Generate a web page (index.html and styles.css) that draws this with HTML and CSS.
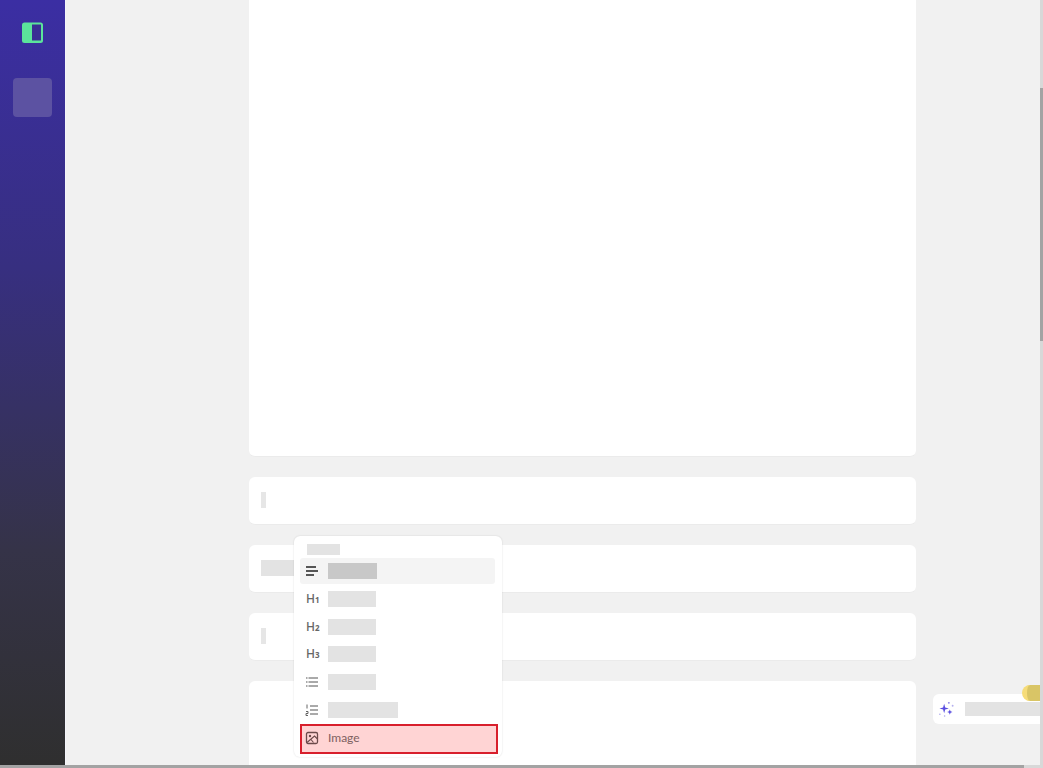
FILE: index.html
```html
<!DOCTYPE html>
<html lang="en">
<head>
<meta charset="utf-8">
<title>Editor</title>
<link rel="stylesheet" href="styles.css">
</head>
<body>
<div class="app">
  <aside class="sidebar">
    <button class="toggle" aria-label="Toggle sidebar">
      <svg width="22" height="22" viewBox="0 0 22 22"><rect x="0" y="0.500" width="21" height="20.500" rx="2.500" fill="#5be49b"/><rect x="10" y="2.500" width="9" height="16" fill="#3a2e94"/></svg>
    </button>
    <div class="nav-tile"></div>
  </aside>
  <main class="main">
    <div class="column">
      <section class="card card-hero"></section>
      <section class="card card-row"><span class="ph ph-thin"></span></section>
      <section class="card card-row"><span class="ph ph-wide"></span></section>
      <section class="card card-row"><span class="ph ph-thin"></span></section>
      <section class="card card-last"></section>
    </div>
  </main>
</div>

<div class="menu">
  <span class="ph menu-title"></span>
  <ul class="menu-list">
    <li class="item item-active">
      <svg class="ico" width="14" height="14" viewBox="0 0 14 14"><path d="M1 3h10M1 7h12M1 11h8" stroke="#222" stroke-width="1.300" fill="none"/></svg>
      <span class="ph ph-dark w49"></span>
    </li>
    <li class="item"><span class="hd">H<small>1</small></span><span class="ph w48"></span></li>
    <li class="item"><span class="hd">H<small>2</small></span><span class="ph w48"></span></li>
    <li class="item"><span class="hd">H<small>3</small></span><span class="ph w48"></span></li>
    <li class="item">
      <svg class="ico" width="14" height="14" viewBox="0 0 14 14"><path d="M3.500 3h9.500M3.500 7h9.500M3.500 11h9.500" stroke="#555" stroke-width="1" fill="none"/><path d="M1 3h1.500M1 7h1.500M1 11h1.500" stroke="#555" stroke-width="1.200" fill="none"/></svg>
      <span class="ph w48"></span>
    </li>
    <li class="item">
      <svg class="ico" width="14" height="14" viewBox="0 0 14 14"><path d="M5 3h8M5 7h8M5 11h8" stroke="#555" stroke-width="1" fill="none"/><path d="M2 1.500v4M1 8.500h2v2H1v2h2" stroke="#555" stroke-width=".9" fill="none"/></svg>
      <span class="ph w70"></span>
    </li>
    <li class="item item-image">
      <svg class="ico" width="14" height="14" viewBox="0 0 14 14"><rect x="1.500" y="1.500" width="11" height="11" rx="1.500" stroke="#6b4a4a" stroke-width="1.300" fill="none"/><path d="M2 11.500L9.500 5l3 3M6 8.500l2.500 3" stroke="#6b4a4a" stroke-width="1.100" fill="none"/><circle cx="5" cy="5" r="1.200" fill="#6b4a4a"/></svg>
      <span class="item-label">Image</span>
    </li>
  </ul>
</div>

<div class="assist">
  <svg width="18" height="18" viewBox="0 0 18 18"><path d="M6.500 3.500l1.100 3.900 3.900 1.100-3.900 1.100-1.100 3.900-1.100-3.900-3.900-1.100 3.900-1.100z" fill="#5a4ee0"/><path d="M12.500 9.500l.8 2 2 .8-2 .8-.8 2-.8-2-2-.8 2-.8z" fill="#5a4ee0"/><circle cx="11.500" cy="2.500" r="1" fill="#8d84e6"/><circle cx="15.500" cy="5.500" r="1" fill="#b5b0ee"/><circle cx="2" cy="14.500" r=".8" fill="#a8a2ec"/><circle cx="7" cy="16.500" r=".8" fill="#a8a2ec"/></svg>
  <span class="ph assist-bar"></span>
</div>
<div class="tag"></div>

<div class="vbar"><div class="vthumb"></div></div>
<div class="hbar"><div class="hthumb"></div></div>
</body>
</html>
```
FILE: styles.css
```css
* { box-sizing: border-box; }
html, body { margin: 0; height: 100%; overflow: hidden; }
body { font-family: "Noto Sans", "Liberation Sans", sans-serif; background: #f1f1f1; }
.app { display: flex; height: 765px; }
.sidebar {
  width: 66px; flex: none; display: flex; flex-direction: column; align-items: center;
  padding: 22px 0 0 0; gap: 34px; border-right: 1px solid #f4f4fa;
  background: linear-gradient(180deg, #3b2ea3 0%, #372f80 35%, #353348 72%, #2f2f2f 100%);
}
.toggle { width: 22px; height: 22px; padding: 0; border: 0; background: none; display: block; }
.toggle svg { display: block; }
.nav-tile { width: 39px; height: 39px; border-radius: 4px; background: #5c52a2; }
.main { flex: 1; overflow: hidden; padding-left: 183px; }
.column { width: 667px; display: flex; flex-direction: column; gap: 20px; }
.card { background: #fff; border-radius: 6px; border-bottom: 1px solid #ebebeb; flex: none; }
.card-hero { height: 457px; border-radius: 0 0 6px 6px; }
.card-row { height: 48px; padding: 0 12px 1px; display: flex; align-items: center; }
.card-last { height: 100px; }
.ph { display: block; background: #e3e3e3; height: 16px; flex: none; }
.ph-thin { width: 5px; background: #e6e6e6; }
.ph-wide { width: 60px; }
.menu {
  position: absolute; left: 294px; top: 536px; width: 208px; height: 221px;
  background: #fff; border-radius: 6px; box-shadow: 0 0 2px rgba(0,0,0,.14);
  padding: 8px 4px 0 6px;
}
.menu-title { width: 33px; height: 11px; margin-left: 7px; }
.menu-list { list-style: none; margin: 3.300px 0 0; padding: 0; }
.item { height: 26px; margin-bottom: 1.700px; display: flex; align-items: center; padding-left: 5px; gap: 9px; width: 195px; }
.item .ico, .hd { width: 14px; flex: none; }
.item-active { background: #f4f4f4; border-radius: 3px; }
.hd { font-size: 12px; font-weight: 500; color: #666; line-height: 14px; white-space: nowrap; padding: 1px 0 0 1px; }
.hd small { font-size: 8px; font-weight: 700; }
.ph-dark { background: #c8c8c8; }
.w48 { width: 48px; }
.w49 { width: 49px; }
.w70 { width: 70px; }
.item.item-image {
  width: 198px; height: 30px; margin: -0.500px 0 0; background: #ffd4d4; border: 2px solid #d81f2c;
  padding: 0 0 2px 3px; gap: 9px;
}
.item-label { font-family: Lato, "Noto Sans", sans-serif; font-size: 12px; color: #7d6060; }
.assist {
  position: absolute; left: 933px; top: 694px; width: 107px; height: 30px;
  background: #fff; border-radius: 6px 0 0 6px; display: flex; align-items: center;
  padding-left: 5px; gap: 10px;
}
.assist-bar { width: 75px; height: 14px; }
.tag { position: absolute; left: 1022px; top: 685px; width: 18px; height: 16px; border-radius: 8px 0 0 8px; background: #d9c566; border-left: 5px solid #f6dc78; }
.vbar { position: absolute; right: 0; top: 0; width: 3px; height: 765px; background: #d8d8d8; padding-top: 88px; }
.vthumb { height: 253px; background: #a3a3a3; }
.hbar { position: absolute; left: 0; bottom: 0; width: 100%; height: 3px; background: #d8d8d8; }
.hthumb { width: 1024px; height: 3px; background: #a3a3a3; }
```
